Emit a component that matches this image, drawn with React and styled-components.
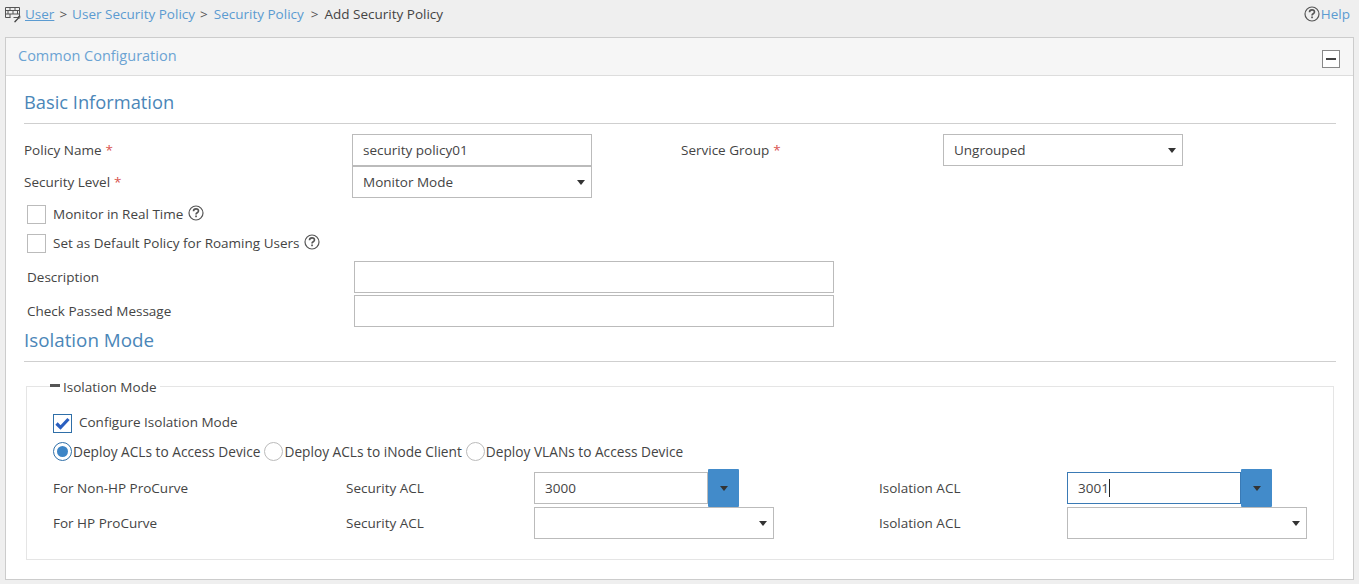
import React from 'react';
import styled, { createGlobalStyle } from 'styled-components';

const GlobalStyle = createGlobalStyle`
  html, body {
    margin: 0;
    padding: 0;
    background: #efefef;
    font-family: "Open Sans", "Noto Sans", "Liberation Sans", sans-serif;
    font-size: 13.5px;
    color: #444444;
  }
  * {
    box-sizing: border-box;
  }
`;

const Page = styled.div`
  width: 1359px;
  height: 584px;
  overflow: hidden;
`;

const TopBar = styled.div`
  display: flex;
  align-items: flex-start;
  justify-content: space-between;
  height: 37px;
  padding: 4px 9px 0 5px;
`;

const Crumbs = styled.div`
  display: flex;
  align-items: center;
  height: 20px;
`;

const CrumbLink = styled.a`
  color: #5b9bd1;
  text-decoration: ${p => (p.$underline ? 'underline' : 'none')};
`;

const CrumbSep = styled.span`
  margin: 0 ${p => p.$right}px 0 ${p => p.$left}px;
  color: #555555;
`;

const HelpLink = styled.div`
  display: flex;
  align-items: center;
  height: 20px;
  color: #5b9bd1;
`;

const Panel = styled.div`
  margin: 0 5px;
  height: 543px;
  background: #ffffff;
  border: 1px solid #cccccc;
`;

const PanelHead = styled.div`
  display: flex;
  align-items: center;
  justify-content: space-between;
  height: 38px;
  padding: 0 13px 2px 12px;
  background: #f6f6f6;
  border-bottom: 1px solid #dddddd;
  color: #6ba3d3;
  font-size: 14.5px;
`;

const Collapse = styled.div`
  display: flex;
  align-items: center;
  justify-content: center;
  width: 18px;
  height: 18px;
  margin-top: 7px;
  background: #ffffff;
  border: 1px solid #888888;

  &::before {
    content: '';
    width: 10px;
    height: 2px;
    background: #444444;
  }
`;

const PanelBody = styled.div`
  padding: 0 17px 0 18px;
`;

const SectionTitle = styled.div`
  display: flex;
  align-items: center;
  height: ${p => p.$height}px;
  padding: ${p => p.$top || 0}px 0 ${p => p.$bottom || 0}px;
  border-bottom: 1px solid #cfcfcf;
  color: #4a86b8;
  font-size: ${p => p.$size}px;
`;

const FormGrid = styled.div`
  display: grid;
  grid-template-columns: 328px 240px 89px 262px 240px;
  align-items: center;
  margin-top: 10px;
`;

const Label = styled.div`
  padding-left: ${p => p.$indent || 0}px;
  white-space: nowrap;
`;

const Star = styled.span`
  margin-left: 4px;
  color: #d9534f;
`;

const Field = styled.div`
  display: flex;
  align-items: center;
  justify-content: space-between;
  flex: none;
  width: ${p => p.$width || 240}px;
  height: 32px;
  padding: 0 6px 0 10px;
  background: #ffffff;
  border: 1px solid ${p => (p.$focus ? '#3a7ab5' : '#bbbbbb')};
  color: #444444;
`;

const Caret = styled.span`
  width: 1px;
  height: 18px;
  background: #222222;
`;

const FieldText = styled.span`
  display: flex;
  align-items: center;
`;

const Arrow = styled.span`
  width: 0;
  height: 0;
  border-left: 4.5px solid transparent;
  border-right: 4.5px solid transparent;
  border-top: 5px solid #333333;
`;

const CheckRow = styled.div`
  display: flex;
  align-items: center;
  height: 29px;
  margin-top: ${p => p.$gap || 0}px;
  padding: 0 0 2px 3px;
`;

const Box = styled.span`
  display: flex;
  align-items: center;
  justify-content: center;
  flex: none;
  width: 19px;
  height: 19px;
  margin: 2px 7px 0 0;
  background: #ffffff;
  border: 1px solid ${p => (p.$on ? '#2f6fa8' : '#bbbbbb')};
`;

const TextRow = styled.div`
  display: grid;
  grid-template-columns: 330px 480px;
  align-items: center;
  margin-top: ${p => p.$gap}px;
`;

const IsolationSet = styled.fieldset`
  position: relative;
  height: 174px;
  margin: 24px 2px 0 2px;
  padding: 0 0 0 26px;
  border: 1px solid #e5e5e5;
`;

const SetLegend = styled.div`
  position: absolute;
  top: -9px;
  left: 23px;
  display: flex;
  align-items: center;
  height: 18px;
  padding: 0 4px 0 0;
  background: #ffffff;

  &::before {
    content: '';
    width: 10px;
    height: 3px;
    margin: -3px 3px 0 0;
    background: #555555;
  }
`;

const SetCheck = styled(CheckRow)`
  height: 20px;
  margin-top: 26px;
  padding-left: 0;
`;

const RadioRow = styled.div`
  display: flex;
  align-items: center;
  height: 19px;
  margin-top: 9px;
  font-size: 13.7px;
`;

const Radio = styled.span`
  display: flex;
  align-items: center;
  justify-content: center;
  flex: none;
  width: 19px;
  height: 19px;
  margin: 0 1px 0 ${p => p.$before || 0}px;
  background: #ffffff;
  border: 1px solid ${p => (p.$on ? '#2f6fa8' : '#bbbbbb')};
  border-radius: 50%;

  &::before {
    content: '';
    display: ${p => (p.$on ? 'block' : 'none')};
    width: 11px;
    height: 11px;
    border-radius: 50%;
    background: #3d85c6;
  }
`;

const AclGrid = styled.div`
  display: grid;
  grid-template-columns: 293px 188px 345px 188px 1fr;
  grid-template-rows: 38px 32px;
  align-items: center;
  margin-top: 8px;
`;

const Combo = styled.div`
  display: flex;
  align-items: center;
  height: 38px;
`;

const ComboButton = styled.div`
  display: flex;
  align-items: center;
  justify-content: center;
  flex: none;
  width: 31px;
  height: 38px;
  background: #428bca;
  border-radius: 1px;
`;

const HelpIcon = ({ className }) => (
  <svg className={className} width="16" height="16" viewBox="0 0 16 16" fill="none">
    <circle cx="8" cy="8" r="7" stroke="#555555" strokeWidth="1.2" />
    <path d="M5.5 6.2c0-1.4 1.1-2.3 2.5-2.3s2.5.9 2.5 2.1c0 1.8-2.5 1.7-2.5 3.4" stroke="#555555" strokeWidth="1.6" />
    <rect x="7.2" y="10.5" width="1.7" height="1.7" fill="#555555" />
  </svg>
);

const HintIcon = styled(HelpIcon)`
  margin: -2px 0 0 5px;
`;

const TopHelpIcon = styled(HelpIcon)`
  margin-right: 1px;
`;

const WallSvg = styled.svg`
  margin: 2px 2px 0 0;
`;

const WallIcon = () => (
  <WallSvg width="18" height="18" viewBox="0 0 18 18" fill="none">
    <path d="M.5 1.5h14v10h-6M.5 1.5v10h5M.5 4.5h14M.5 8h14M5 1.5v3M10 1.5v3M3 4.5V8M8 4.5V8M12.5 4.5V8M5 8v3.5" stroke="#555555" />
    <path d="M15.8 9.7c.7 1.4-.3 3-1.9 2.9l-3.5 3.6c-.6.6-1.5-.4-1-.9l3.5-3.6c-.2-1.5 1-2.6 2.4-2.1l-1.3 1.4.4 1 1 .2z" fill="#444444" />
  </WallSvg>
);

const CheckMark = () => (
  <svg width="15" height="13" viewBox="0 0 15 13" fill="none">
    <path d="M1.5 6.5l4 4 8-8.5" stroke="#2a5fc0" strokeWidth="3.2" />
  </svg>
);

export default function App() {
  return (
    <Page>
      <GlobalStyle />
      <TopBar>
        <Crumbs>
          <WallIcon />
          <CrumbLink $underline>User</CrumbLink>
          <CrumbSep $left={5} $right={5}>&gt;</CrumbSep>
          <CrumbLink>User Security Policy</CrumbLink>
          <CrumbSep $left={5} $right={6}>&gt;</CrumbSep>
          <CrumbLink>Security Policy</CrumbLink>
          <CrumbSep $left={7} $right={6}>&gt;</CrumbSep>
          <span>Add Security Policy</span>
        </Crumbs>
        <HelpLink>
          <TopHelpIcon />
          Help
        </HelpLink>
      </TopBar>
      <Panel>
        <PanelHead>
          Common Configuration
          <Collapse />
        </PanelHead>
        <PanelBody>
          <SectionTitle $height={48} $top={3} $size={18.3}>Basic Information</SectionTitle>
          <FormGrid>
            <Label>Policy Name<Star>*</Star></Label>
            <Field>security policy01</Field>
            <span />
            <Label>Service Group<Star>*</Star></Label>
            <Field>Ungrouped<Arrow /></Field>
            <Label>Security Level<Star>*</Star></Label>
            <Field>Monitor Mode<Arrow /></Field>
          </FormGrid>
          <CheckRow $gap={2}>
            <Box />
            Monitor in Real Time
            <HintIcon />
          </CheckRow>
          <CheckRow>
            <Box />
            Set as Default Policy for Roaming Users
            <HintIcon />
          </CheckRow>
          <TextRow $gap={3}>
            <Label $indent={3}>Description</Label>
            <Field $width={480} />
          </TextRow>
          <TextRow $gap={2}>
            <Label $indent={3}>Check Passed Message</Label>
            <Field $width={480} />
          </TextRow>
          <SectionTitle $height={35} $bottom={8} $size={18.8}>Isolation Mode</SectionTitle>
          <IsolationSet>
            <SetLegend>Isolation Mode</SetLegend>
            <SetCheck>
              <Box $on><CheckMark /></Box>
              Configure Isolation Mode
            </SetCheck>
            <RadioRow>
              <Radio $on />
              Deploy ACLs to Access Device
              <Radio $before={4} />
              Deploy ACLs to iNode Client
              <Radio $before={4} />
              Deploy VLANs to Access Device
            </RadioRow>
            <AclGrid>
              <Label>For Non-HP ProCurve</Label>
              <Label>Security ACL</Label>
              <Combo>
                <Field $width={174}>3000</Field>
                <ComboButton><Arrow /></ComboButton>
              </Combo>
              <Label>Isolation ACL</Label>
              <Combo>
                <Field $width={174} $focus><FieldText>3001<Caret /></FieldText></Field>
                <ComboButton><Arrow /></ComboButton>
              </Combo>
              <Label>For HP ProCurve</Label>
              <Label>Security ACL</Label>
              <Field><span /><Arrow /></Field>
              <Label>Isolation ACL</Label>
              <Field><span /><Arrow /></Field>
            </AclGrid>
          </IsolationSet>
        </PanelBody>
      </Panel>
    </Page>
  );
}
